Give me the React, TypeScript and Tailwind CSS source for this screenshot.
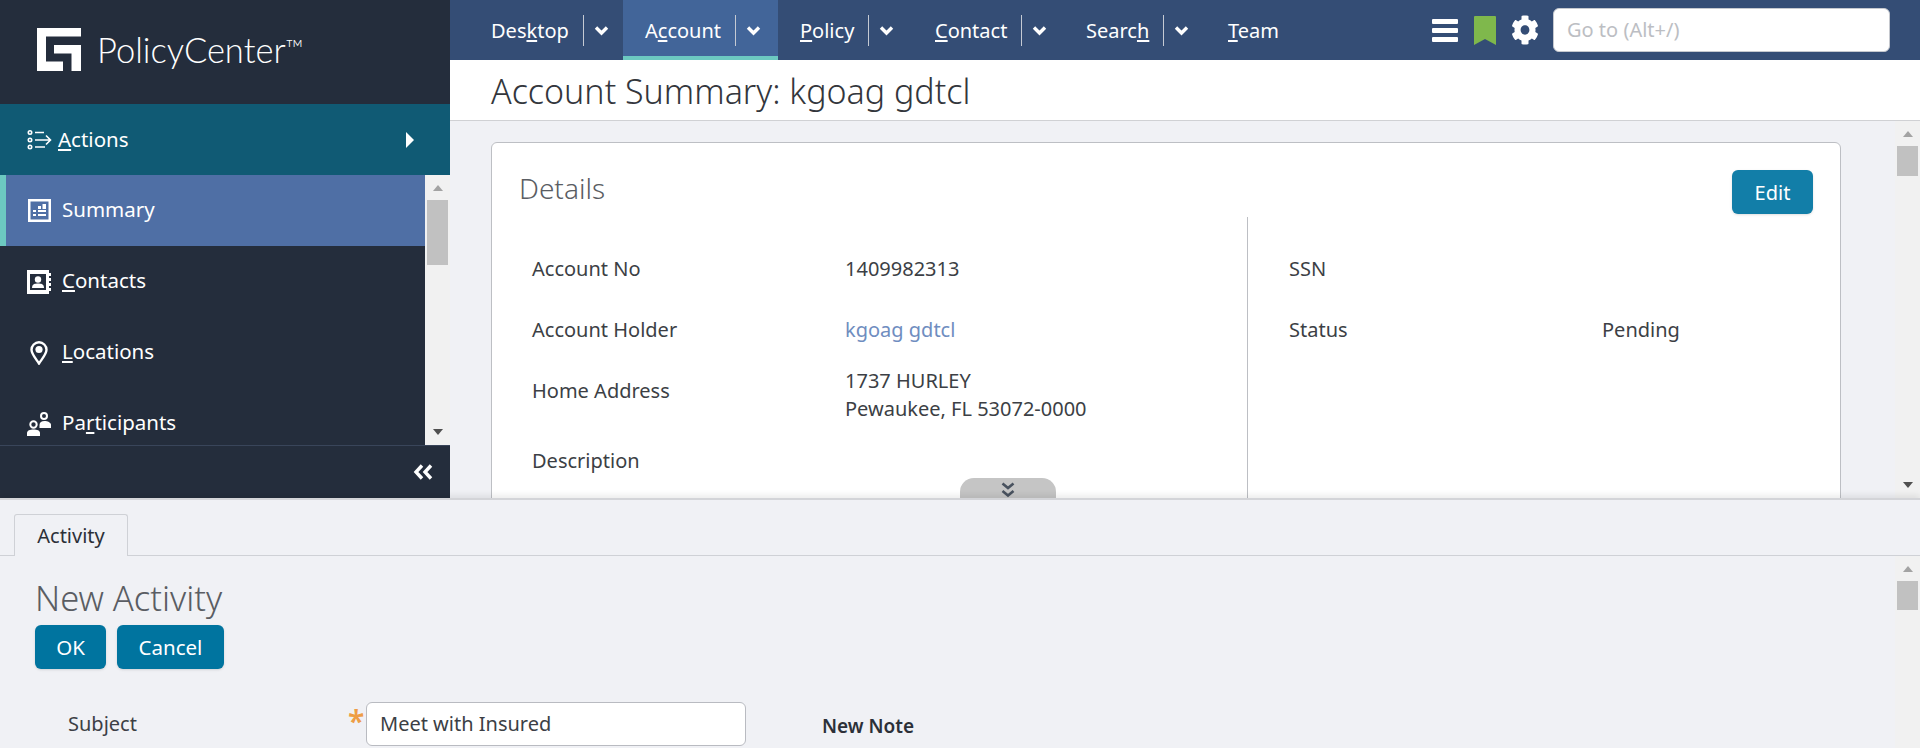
import React from "react";

const sans = "font-['Noto_Sans',sans-serif]";

function Ul({ b, u, a }: { b?: string; u: string; a?: string }) {
  return (
    <span>
      {b}
      <span className="underline underline-offset-2">{u}</span>
      {a}
    </span>
  );
}

function Chev({ className }: { className?: string }) {
  return (
    <svg width="15" height="11" viewBox="0 0 15 11" className={className}>
      <path d="M2 2.500 L7.500 8 L13 2.500" fill="none" stroke="#fff" strokeWidth="3.400" />
    </svg>
  );
}

function Tab({ children, arrow = true, active = false, w }: { children: React.ReactNode; arrow?: boolean; active?: boolean; w: string }) {
  return (
    <div className={`${w} h-[60px] flex items-center pl-[22px] text-white text-[20px] ${active ? "bg-[#426599] border-b-4 border-[#6cc9c1] pt-[4px]" : ""}`}>
      <span className="whitespace-nowrap mt-[1px]">{children}</span>
      {arrow && (
        <>
          <span className="ml-[14px] w-px h-[31px] bg-[#c5cad3]" />
          <Chev className="ml-[10px]" />
        </>
      )}
    </div>
  );
}

function ScrollBar({ thumbH, className }: { thumbH: string; className: string }) {
  return (
    <div className={`flex flex-col items-center bg-[#f1f1f1] shrink-0 ${className}`}>
      <div className="mt-[10px] w-0 h-0 border-x-[5.5px] border-x-transparent border-b-[6px] border-b-[#a3a3a3]" />
      <div className={`${thumbH} mt-[9px] w-[21px] bg-[#c1c1c1]`} />
      <div className="flex-1" />
      <div className="mb-[10px] w-0 h-0 border-x-[5.5px] border-x-transparent border-t-[6px] border-t-[#505050]" />
    </div>
  );
}

function NavItem({ icon, children, active = false }: { icon: React.ReactNode; children: React.ReactNode; active?: boolean }) {
  return (
    <div className={`h-[71px] shrink-0 flex items-center text-[20.500px] text-white ${active ? "bg-[#4f6fa5] border-l-[6px] border-[#6cc9c1] pl-[21px]" : "pl-[27px]"}`}>
      <span className="w-[24px] h-[24px] flex items-center justify-center shrink-0">{icon}</span>
      <span className="ml-[11px] -mt-[2px] whitespace-nowrap">{children}</span>
    </div>
  );
}

function Row({ label, value, link, h, valueClass = "" }: { label: string; value?: React.ReactNode; link?: boolean; h: string; valueClass?: string }) {
  return (
    <div className={`${h} flex items-center text-[20px] text-[#3c3f45]`}>
      <div className="w-[313px] shrink-0">{label}</div>
      <div className={`leading-[28px] ${valueClass} ${link ? "text-[#6f8dc0]" : ""}`}>{value}</div>
    </div>
  );
}

export default function App() {
  return (
    <div className={`w-[1920px] h-[748px] overflow-hidden flex flex-col bg-[#f0f1f5] ${sans}`}>
      <div className="h-[498px] shrink-0 flex">
        {/* Sidebar */}
        <aside className="w-[450px] shrink-0 flex flex-col bg-[#242d3c]">
          <div className="h-[104px] shrink-0 flex items-start pl-[37px] pt-[28px]">
            <svg width="44" height="43" viewBox="0 0 44 43">
              <path fill="#fff" d="M0 0H44V8.500H9V33.500H26V43H0Z" />
              <path fill="#fff" d="M17 17H44V43H34.500V25.500H17Z" />
            </svg>
            <span className="ml-[16px] mt-[1px] font-['Lato',sans-serif] text-[34.500px] leading-[38px] font-light text-white whitespace-nowrap">PolicyCenter<span className="text-[24px] align-[6px]">™</span></span>
          </div>
          <div className="h-[71px] shrink-0 flex items-center bg-[#105a74] pl-[27px] pr-[36px] text-[20.500px] text-white">
            <svg width="25" height="20" viewBox="0 0 25 20" fill="none" stroke="#fff" strokeWidth="1.600">
              <circle cx="3" cy="2.500" r="1.700" />
              <circle cx="3" cy="10" r="1.700" />
              <circle cx="3" cy="17" r="1.700" />
              <path d="M8 2.500H17M8 10H23M19 5.500L23.500 10L19 14.500M8 17H18" />
            </svg>
            <span className="ml-[6px]"><Ul u="A" a="ctions" /></span>
            <div className="flex-1" />
            <div className="w-0 h-0 border-y-[8px] border-y-transparent border-l-[8px] border-l-white" />
          </div>
          <div className="flex-1 min-h-0 flex">
            <div className="flex-1 min-w-0 overflow-hidden flex flex-col">
              <NavItem active icon={
                <svg width="23" height="23" viewBox="0 0 23 23">
                  <path fill="#fff" fillRule="evenodd" d="M0 0H23V23H0Z M2.500 2.500V20.500H20.500V2.500Z" />
                  <path fill="#fff" d="M5 11H8V13H5ZM5 15H8V17H5ZM10 15H18V17H10ZM10 11H18V13H10ZM10 7H13V10H10ZM14.500 5H18V10H14.500Z" />
                </svg>
              }>Summary</NavItem>
              <NavItem icon={
                <svg width="24" height="24" viewBox="0 0 24 24">
                  <path fill="#fff" fillRule="evenodd" d="M0 0H22V24H0Z M3 4V20H19V4Z" />
                  <path fill="#fff" d="M22 3H24V6H22ZM22 8H24V11H22ZM22 13H24V16H22ZM22 18H24V21H22Z" />
                  <circle cx="11" cy="9.500" r="3.200" fill="#fff" />
                  <path fill="#fff" d="M5 18C5 14 8 13.500 11 13.500C14 13.500 17 14 17 18Z" />
                </svg>
              }><Ul u="C" a="ontacts" /></NavItem>
              <NavItem icon={
                <svg width="18" height="24" viewBox="0 0 18 24">
                  <path fill="none" stroke="#fff" strokeWidth="2.400" d="M9 22.500C6 18 1.500 13 1.500 8.800A7.500 7.500 0 0 1 16.500 8.800C16.500 13 12 18 9 22.500Z" />
                  <circle cx="9" cy="8.500" r="3.600" fill="#fff" />
                </svg>
              }><Ul u="L" a="ocations" /></NavItem>
              <NavItem icon={
                <svg width="24" height="24" viewBox="0 0 24 24" fill="none" stroke="#fff" strokeWidth="2">
                  <circle cx="6.500" cy="12.500" r="3.200" />
                  <path d="M0 24V21C0 18.500 3 17.500 6.500 17.500S13 18.500 13 21V24Z" fill="#fff" stroke="none" />
                  <circle cx="17" cy="4" r="3" />
                  <path d="M12.500 16V13C12.500 10.500 14.500 9 17.500 9S24 10.500 24 13V16Z" fill="#fff" stroke="none" />
                </svg>
              }><Ul b="Pa" u="r" a="ticipants" /></NavItem>
            </div>
            <ScrollBar className="w-[25px]" thumbH="h-[65px]" />
          </div>
          <div className="h-[53px] shrink-0 border-t border-[#39455a] flex items-center justify-end pr-[17px]">
            <svg width="20" height="16" viewBox="0 0 20 16" fill="none" stroke="#fff" strokeWidth="3.400">
              <path d="M9 1.500L3 8L9 14.500M18 1.500L12 8L18 14.500" />
            </svg>
          </div>
        </aside>

        {/* Main */}
        <div className="flex-1 min-w-0 flex flex-col">
          <nav className="h-[60px] shrink-0 bg-[#344d75] flex items-center">
            <div className="w-[19px]" />
            <Tab w="w-[154px]"><Ul b="Des" u="k" a="top" /></Tab>
            <Tab w="w-[155px]" active><Ul b="A" u="c" a="count" /></Tab>
            <Tab w="w-[135px]"><Ul u="P" a="olicy" /></Tab>
            <Tab w="w-[151px]"><Ul u="C" a="ontact" /></Tab>
            <Tab w="w-[142px]"><Ul b="Searc" u="h" /></Tab>
            <Tab w="w-[100px]" arrow={false}><Ul u="T" a="eam" /></Tab>
            <div className="flex-1" />
            <svg width="26" height="23" viewBox="0 0 26 23" fill="#fff">
              <rect y="0" width="26" height="5" rx="1" />
              <rect y="9" width="26" height="5" rx="1" />
              <rect y="18" width="26" height="5" rx="1" />
            </svg>
            <svg className="ml-[16px]" width="22" height="29" viewBox="0 0 22 29">
              <path fill="#7fb84c" d="M1 0H21A1 1 0 0 1 22 1V29L11 23L0 29V1A1 1 0 0 1 1 0Z" />
            </svg>
            <svg className="ml-[15px]" width="28" height="30" viewBox="0 0 512 512" preserveAspectRatio="none">
              <path fill="#fff" d="M487.400 315.700l-42.600-24.600c4.300-23.200 4.300-47 0-70.200l42.600-24.600c4.900-2.800 7.100-8.600 5.500-14-11.100-35.600-30-67.800-54.700-94.600-3.800-4.100-10-5.100-14.800-2.300L380.800 110c-17.900-15.400-38.500-27.300-60.800-35.100V25.800c0-5.600-3.900-10.500-9.400-11.700-36.700-8.200-74.300-7.800-109.200 0-5.500 1.200-9.400 6.100-9.400 11.700V75c-22.200 7.900-42.800 19.800-60.800 35.100L88.700 85.500c-4.900-2.800-11-1.900-14.800 2.300-24.700 26.700-43.600 58.900-54.700 94.600-1.700 5.400.6 11.200 5.500 14L67.300 221c-4.300 23.200-4.300 47 0 70.200l-42.600 24.600c-4.900 2.800-7.100 8.600-5.500 14 11.100 35.600 30 67.800 54.700 94.600 3.800 4.100 10 5.100 14.800 2.300l42.600-24.600c17.900 15.400 38.500 27.300 60.800 35.100v49.200c0 5.600 3.900 10.500 9.400 11.700 36.700 8.200 74.300 7.800 109.200 0 5.500-1.200 9.400-6.100 9.400-11.700v-49.200c22.200-7.900 42.800-19.800 60.800-35.100l42.600 24.600c4.900 2.800 11 1.900 14.800-2.300 24.700-26.700 43.600-58.900 54.700-94.600 1.500-5.500-.7-11.300-5.600-14.100zM256 336c-44.100 0-80-35.900-80-80s35.900-80 80-80 80 35.900 80 80-35.900 80-80 80z" />
            </svg>
            <div className="ml-[14px] mr-[30px] w-[337px] h-[44px] bg-white rounded-[6px] border border-[#c5c8ce] flex items-center pl-[13px] text-[20px] text-[#bcbec3]">Go to (Alt+/)</div>
          </nav>
          <div className="h-[61px] shrink-0 bg-white border-b border-[#d0d1d4] flex items-center pl-[41px] pt-[2px] text-[34px] font-light text-[#33363c] whitespace-nowrap">Account Summary: kgoag gdtcl</div>
          <div className="flex-1 min-h-0 flex overflow-hidden">
            <div className="flex-1 min-w-0 pt-[21px] pl-[41px] pr-[54px] overflow-hidden">
              <div className="h-[400px] bg-white border border-[#bdbfc4] rounded-[6px] flex flex-col">
                <div className="h-[74px] shrink-0 flex items-start justify-between pl-[27px] pr-[27px] pt-[27px]">
                  <span className="text-[28px] leading-[36px] font-light text-[#5a5d63]">Details</span>
                  <div className="w-[81px] h-[44px] bg-[#127ea8] rounded-[6px] shadow-sm flex items-center justify-center text-[20px] text-white pt-[1px]">Edit</div>
                </div>
                <div className="flex">
                  <div className="relative w-[756px] border-r border-[#bdbfc4] h-[400px] pt-[21px] pl-[40px]">
                    <Row h="h-[61px]" label="Account No" value="1409982313" />
                    <Row h="h-[61px]" label="Account Holder" value="kgoag gdtcl" link />
                    <Row h="h-[61px]" label="Home Address" valueClass="mt-[8px]" value={<>1737 HURLEY<br />Pewaukee, FL 53072-0000</>} />
                    <Row h="h-[79px]" label="Description" />
                    <div className="absolute left-[468px] top-[261px] w-[96px] h-[30px] bg-[#c5c5c5] rounded-t-[14px] flex justify-center pt-[4px]">
                      <svg width="16" height="16" viewBox="0 0 16 16" fill="none" stroke="#49525f" strokeWidth="2.600">
                        <path d="M2.500 1.500L8 6L13.500 1.500M2.500 9L8 13.500L13.500 9" />
                      </svg>
                    </div>
                  </div>
                  <div className="flex-1 pt-[21px] pl-[41px]">
                    <div className="h-[61px] flex items-center text-[20px] text-[#3c3f45]">SSN</div>
                    <div className="h-[61px] flex items-center text-[20px] text-[#3c3f45]">
                      <div className="w-[313px]">Status</div>
                      <div>Pending</div>
                    </div>
                  </div>
                </div>
              </div>
            </div>
            <ScrollBar className="w-[25px]" thumbH="h-[30px]" />
          </div>
        </div>
      </div>

      {/* Workspace */}
      <div className="flex-1 min-h-0 flex flex-col border-t-2 border-[#d3d4d8] shadow-[0_-3px_6px_rgba(0,0,0,0.08)] relative">
        <div className="h-[56px] shrink-0 border-b border-[#cfd1d6] flex items-end pl-[14px]">
          <div className="w-[114px] h-[42px] -mb-px border border-b-0 border-[#cfd1d6] rounded-t-[3px] bg-[#f0f1f5] flex items-center justify-center text-[20px] text-[#2c3038]">Activity</div>
        </div>
        <div className="flex-1 min-h-0 flex overflow-hidden">
          <div className="flex-1 min-w-0 pl-[35px]">
            <div className="h-[69px] pt-[20px] text-[34.500px] leading-[43px] font-light text-[#5a5d63]">New Activity</div>
            <div className="flex gap-[11px]">
              <div className="w-[71px] h-[44px] bg-[#00749f] rounded-[6px] shadow-sm flex items-center justify-center text-[20.500px] text-white">OK</div>
              <div className="w-[107px] h-[44px] bg-[#00749f] rounded-[6px] shadow-sm flex items-center justify-center text-[20.500px] text-white">Cancel</div>
            </div>
            <div className="mt-[33px] flex items-center pl-[33px] text-[20px] text-[#3c3f45]">
              <div className="w-[280px]">Subject</div>
              <div className="w-[18px] text-[#ee9d46] text-[30px] leading-[30px] -mt-[6px] font-semibold">*</div>
              <div className="w-[380px] h-[44px] bg-white border border-[#b9bbc1] rounded-[6px] flex items-center pl-[13px]">Meet with Insured</div>
              <div className="ml-[76px] text-[19px] font-semibold text-[#2c3038] mt-[4px]">New Note</div>
            </div>
          </div>
          <ScrollBar className="w-[25px] h-[400px]" thumbH="h-[29px]" />
        </div>
      </div>
    </div>
  );
}
